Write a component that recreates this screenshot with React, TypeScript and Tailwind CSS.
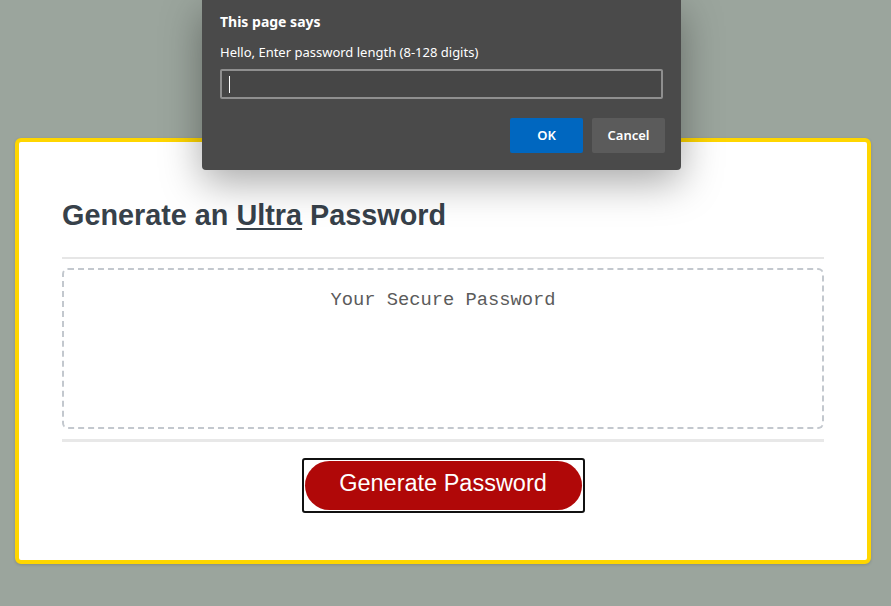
export default function App() {
  return (
    <div className="relative w-[891px] h-[606px] overflow-hidden bg-[#9ba59d] pt-[138px] px-[15px]">
      {/* Card */}
      <div className="w-[856px] h-[426px] rounded-[6px] border-[4px] border-[#ffd600] bg-white shadow-[0_1px_3px_rgba(0,0,0,0.15)] pt-[56px] px-[43px] flex flex-col">
        <h2
          className="text-[28.8px] leading-[34px] font-bold text-[#37414a]"
          style={{ fontFamily: '"Liberation Sans", Arial, sans-serif' }}
        >
          Generate an <span className="underline underline-offset-[3px] decoration-2">Ultra</span> Password
        </h2>
        <div className="mt-[25px] h-[2px] bg-[#e6e6e6]" />
        <div className="mt-[9px] h-[161px] rounded-[6px] border-2 border-dashed border-[#c3c8ce] pt-[17px] text-center">
          <span
            className="text-[18.75px] leading-[24px] text-[#5b5b5b]"
            style={{ fontFamily: '"Liberation Mono", "DejaVu Sans Mono", monospace' }}
          >
            Your Secure Password
          </span>
        </div>
        <div className="mt-[10px] h-[3px] bg-[#e8e8e8]" />
        <div className="mt-[16px] flex justify-center">
          <div className="w-[283px] h-[55px] rounded-[3px] border-2 border-[#111] p-[1px] bg-white">
            <button
              className="w-full h-full rounded-full bg-[#b00808] text-white text-[23.5px] leading-none pb-[3px]"
              style={{ fontFamily: '"Liberation Sans", Arial, sans-serif' }}
            >
              Generate Password
            </button>
          </div>
        </div>
      </div>

      {/* Prompt dialog */}
      <div
        className="absolute top-0 left-[202px] w-[479px] h-[170px] bg-[#4a4a4a] rounded-b-[4px] shadow-[0_12px_40px_rgba(0,0,0,0.35)] px-[18px] pt-[12px] text-white"
        style={{ fontFamily: '"Noto Sans", "Open Sans", sans-serif' }}
      >
        <div className="text-[14px] leading-[20px] font-bold">This page says</div>
        <div className="mt-[10px] text-[13px] leading-[20px]">Hello, Enter password length (8-128 digits)</div>
        <div className="mt-[7px] w-[443px] h-[30px] border-2 border-[#8f8f8f] rounded-[2px] bg-[#464646] flex items-center pl-[7px]">
          <div className="w-px h-[17px] bg-white" />
        </div>
        <div className="mt-[19px] flex justify-end gap-[9px] -mr-[2px]">
          <button className="w-[73px] h-[35px] rounded-[2px] bg-[#0067c0] text-[13px] font-semibold text-white">OK</button>
          <button className="w-[73px] h-[35px] rounded-[2px] bg-[#5b5b5b] text-[13px] font-semibold text-white">Cancel</button>
        </div>
      </div>
    </div>
  )
}
